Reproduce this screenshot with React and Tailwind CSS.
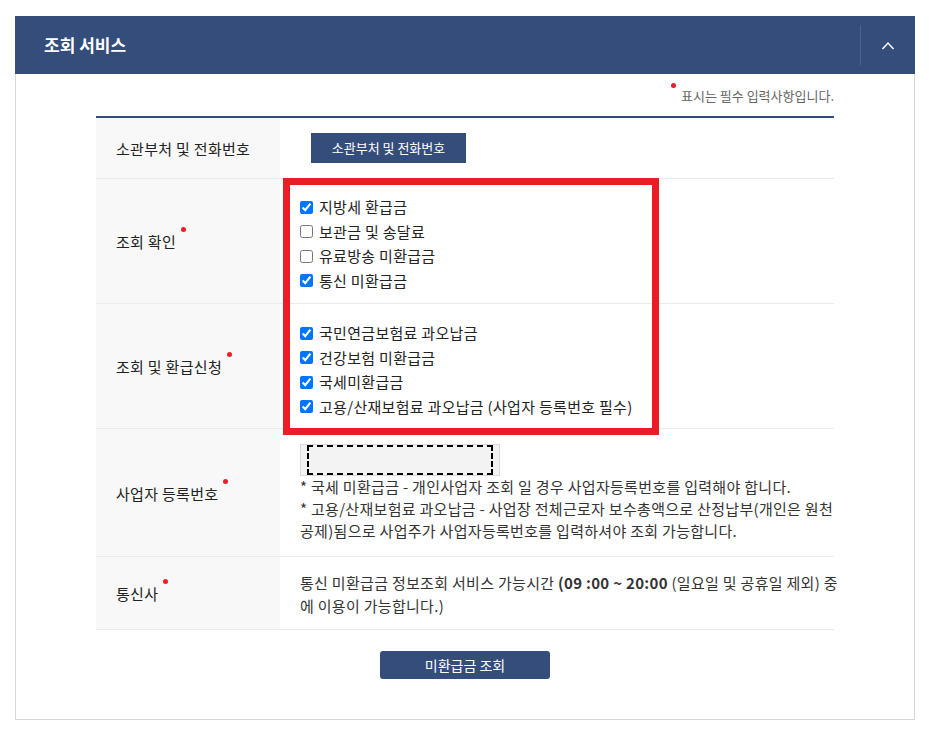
import React from "react";

const font = { fontFamily: '"Noto Sans CJK KR", "Noto Sans", sans-serif' };

function Dot() {
  return (
    <span className="absolute -right-[10px] -top-[4px] w-[5px] h-[5px] rounded-full bg-[#ee1c25]" />
  );
}

function Label({ children, required }) {
  return (
    <div className="w-[184px] shrink-0 bg-[#f8f8f8] flex items-center pl-[20px] pt-[3px] text-[15px] tracking-[0.3px] text-[#222]">
      <span className="relative">
        {children}
        {required && <Dot />}
      </span>
    </div>
  );
}

function Check({ checked, children }) {
  return (
    <label className="flex items-center gap-[6px] text-[15px] tracking-[0.3px] text-[#222] leading-[24.5px]">
      <input
        type="checkbox"
        defaultChecked={checked}
        className="w-[13px] h-[13px] m-0 accent-[#0075ff]"
      />
      <span>{children}</span>
    </label>
  );
}

export default function App() {
  return (
    <div className="bg-white min-h-[736px] pt-[16px] px-[15px]" style={font}>
      <div className="w-[900px]">
        {/* panel header */}
        <div className="h-[58px] bg-[#344d7a] flex items-center justify-between">
          <h2 className="pl-[29px] text-[17px] font-bold text-white">
            조회 서비스
          </h2>
          <div className="h-[40px] w-[55px] border-l border-[#4a6390] flex items-center justify-center">
            <svg width="14" height="9" viewBox="0 0 14 9" fill="none">
              <polyline points="1.5,8 7,2 12.5,8" stroke="#fff" strokeWidth="1.5" />
            </svg>
          </div>
        </div>

        {/* panel body */}
        <div className="relative border border-t-0 border-[#d6d6d6] px-[80px] pt-[14px] pb-[40px]">
          <p className="flex justify-end text-[13px] leading-[16px] text-[#666] mb-[12px]">
            <span className="relative">
              <span className="absolute -left-[10px] -top-[5px] w-[5px] h-[5px] rounded-full bg-[#ee1c25]" />
              표시는 필수 입력사항입니다.
            </span>
          </p>

          <div className="border-t-2 border-[#344d7a]">
            {/* row: department */}
            <div className="flex h-[61px] border-b border-[#ebebeb]">
              <Label>소관부처 및 전화번호</Label>
              <div className="flex items-center pl-[31px]">
                <button className="w-[155px] h-[30px] bg-[#344d7a] text-white text-[13px]">
                  소관부처 및 전화번호
                </button>
              </div>
            </div>

            {/* row: inquiry */}
            <div className="flex h-[125px] border-b border-[#ebebeb]">
              <Label required>조회 확인</Label>
              <div className="pl-[20px] pt-[16px]">
                <Check checked>지방세 환급금</Check>
                <Check>보관금 및 송달료</Check>
                <Check>유료방송 미환급금</Check>
                <Check checked>통신 미환급금</Check>
              </div>
            </div>

            {/* row: inquiry and refund */}
            <div className="flex h-[125px] border-b border-[#ebebeb]">
              <Label required>조회 및 환급신청</Label>
              <div className="pl-[20px] pt-[17px]">
                <Check checked>국민연금보험료 과오납금</Check>
                <Check checked>건강보험 미환급금</Check>
                <Check checked>국세미환급금</Check>
                <Check checked>고용/산재보험료 과오납금 (사업자 등록번호 필수)</Check>
              </div>
            </div>

            {/* row: business number */}
            <div className="flex h-[128px] border-b border-[#ebebeb]">
              <Label required>사업자 등록번호</Label>
              <div className="pl-[20px] pt-[15px]">
                <div className="w-[200px] h-[32px] bg-[#f3f3f3] border border-[#dddddd] px-[6px]">
                  <div className="h-full border-2 border-dashed border-black" />
                </div>
                <div className="text-[15px] tracking-[0.3px] leading-[22px] text-[#333] whitespace-nowrap">
                  <p>* 국세 미환급금 - 개인사업자 조회 일 경우 사업자등록번호를 입력해야 합니다.</p>
                  <p>
                    * 고용/산재보험료 과오납금 - 사업장 전체근로자 보수총액으로 산정납부(개인은 원천
                    <br />
                    공제)됨으로 사업주가 사업자등록번호를 입력하셔야 조회 가능합니다.
                  </p>
                </div>
              </div>
            </div>

            {/* row: carrier */}
            <div className="flex h-[73px] border-b border-[#ebebeb]">
              <Label required>통신사</Label>
              <div className="pl-[20px] pt-[14px] text-[15px] tracking-[0.3px] leading-[23px] text-[#333] whitespace-nowrap">
                통신 미환급금 정보조회 서비스 가능시간 <b className="font-bold">(09 :00 ~ 20:00</b> (일요일 및 공휴일 제외) 중
                <br />
                에 이용이 가능합니다.)
              </div>
            </div>
          </div>

          <div className="flex justify-center mt-[21px]">
            <button className="w-[170px] h-[28px] rounded-[3px] bg-[#344d7a] text-white text-[14px]">
              미환급금 조회
            </button>
          </div>

          {/* highlight frame over the checkbox groups */}
          <div className="absolute left-[267px] top-[104px] w-[376px] h-[257px] border-[7px] border-[#ec1c24] pointer-events-none" />
        </div>
      </div>
    </div>
  );
}
